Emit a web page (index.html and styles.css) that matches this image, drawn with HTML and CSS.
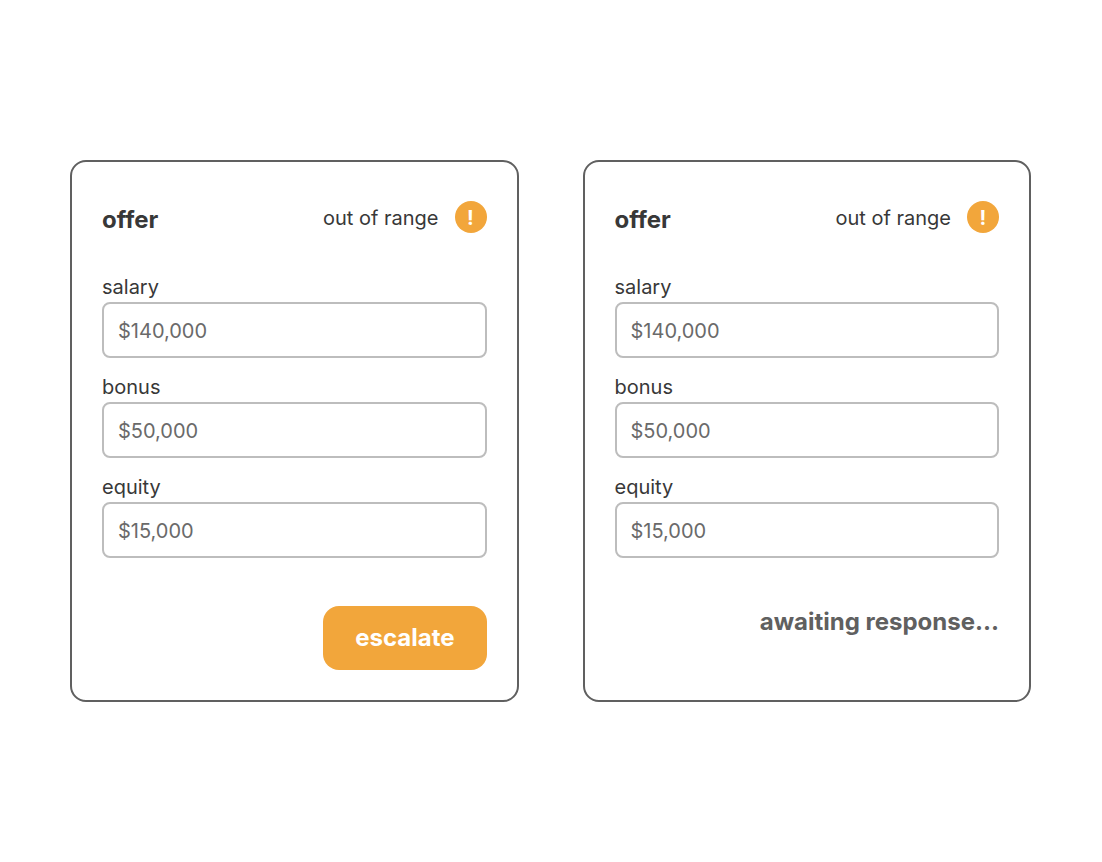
FILE: index.html
```
<!DOCTYPE html>
<html lang="en">

<head>
    <meta charset="UTF-8" />
    <meta name="viewport" content="width=device-width, initial-scale=1.0" />
    <title>Offer</title>
    <link rel="stylesheet" href="styles.css">
</head>

<body>
    <main class="offers">
        <form class="card">
            <header class="card-header">
                <h2>offer</h2>
                <p class="status">out of range <span class="badge">!</span></p>
            </header>
            <div class="field">
                <label for="salary-1">salary</label>
                <input type="text" id="salary-1" value="$140,000">
            </div>
            <div class="field">
                <label for="bonus-1">bonus</label>
                <input type="text" id="bonus-1" value="$50,000">
            </div>
            <div class="field">
                <label for="equity-1">equity</label>
                <input type="text" id="equity-1" value="$15,000">
            </div>
            <footer class="card-footer">
                <button type="button" class="escalate">escalate</button>
            </footer>
        </form>

        <form class="card">
            <header class="card-header">
                <h2>offer</h2>
                <p class="status">out of range <span class="badge">!</span></p>
            </header>
            <div class="field">
                <label for="salary-2">salary</label>
                <input type="text" id="salary-2" value="$140,000">
            </div>
            <div class="field">
                <label for="bonus-2">bonus</label>
                <input type="text" id="bonus-2" value="$50,000">
            </div>
            <div class="field">
                <label for="equity-2">equity</label>
                <input type="text" id="equity-2" value="$15,000">
            </div>
            <footer class="card-footer">
                <p class="awaiting">awaiting response...</p>
            </footer>
        </form>
    </main>
</body>

</html>
```

FILE: styles.css
```
* {
    box-sizing: border-box;
}

body {
    margin: 0;
    background-color: #fff;
    color: #383838;
    font-family: Inter, sans-serif;
    font-size: 20px;
    line-height: 26px;
}

h2,
p {
    margin: 0;
}

.offers {
    display: grid;
    grid-template-columns: 1fr 1fr;
    align-content: center;
    gap: 64px;
    min-height: 100vh;
    padding: 32px 71px 32px 70px;
}

.card {
    padding: 39px 30px 30px;
    border: 2px solid #606060;
    border-radius: 16px;
}

.card-header {
    display: flex;
    justify-content: space-between;
    align-items: flex-start;
    margin-bottom: 35px;
}

h2 {
    font-size: 24px;
    line-height: 38px;
    font-weight: 700;
}

.status {
    display: flex;
    align-items: flex-start;
    gap: 16px;
    line-height: 34px;
}

.badge {
    width: 32px;
    height: 32px;
    border-radius: 50%;
    background-color: #f2a63b;
    color: #fff;
    font-weight: 700;
    text-align: center;
}

.field {
    display: flex;
    flex-direction: column;
    gap: 2px;
    margin-bottom: 16px;
}

.field input {
    width: 100%;
    height: 56px;
    padding: 2px 14px 0;
    border: 2px solid #bdbdbd;
    border-radius: 8px;
    background-color: #fff;
    color: #6a6a6a;
    font: inherit;
}

.card-footer {
    display: flex;
    justify-content: flex-end;
    margin-top: 48px;
}

.escalate {
    height: 64px;
    padding: 0 32px;
    border: none;
    border-radius: 16px;
    background-color: #f2a63b;
    color: #fff;
    font: inherit;
    font-size: 24px;
    font-weight: 700;
}

.awaiting {
    color: #606060;
    font-size: 24px;
    line-height: 32px;
    font-weight: 700;
}
```
